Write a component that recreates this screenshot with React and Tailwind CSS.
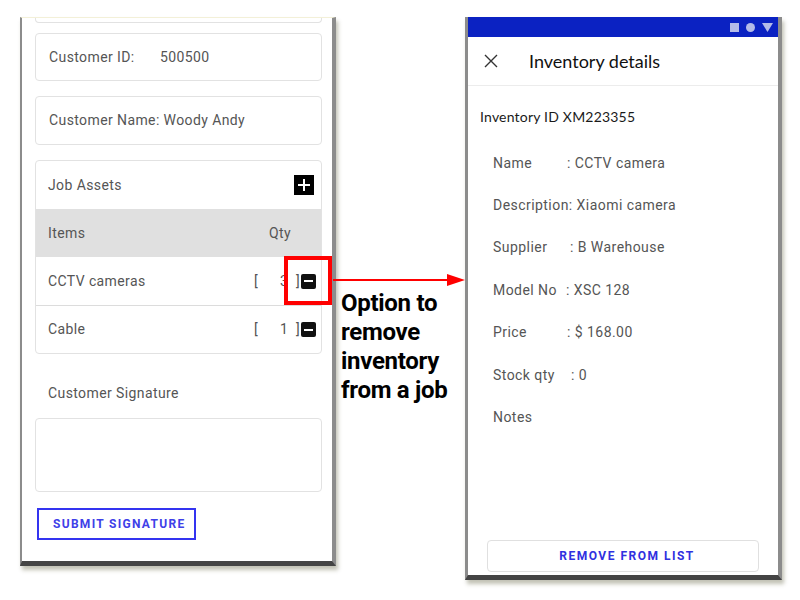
import React from 'react';

// --- small drawn icons ---

const PlusBox = () => (
  <div className="w-5 h-5 bg-black flex items-center justify-center">
    <svg width="14" height="14" viewBox="0 0 14 14">
      <path d="M7 1v12M1 7h12" stroke="#fff" strokeWidth="2" />
    </svg>
  </div>
);

const MinusBox = () => (
  <div className="w-[15px] h-[15px] bg-[#111] rounded-[2px] flex items-center justify-center">
    <div className="w-[9px] h-[2px] bg-white" />
  </div>
);

const assetRows = [
  { name: 'CCTV cameras', qty: 3, highlight: true },
  { name: 'Cable', qty: 1 },
];

const details = [
  { label: 'Name', w: 'w-[74px]', value: ': CCTV camera' },
  { label: 'Description', w: 'w-auto', value: ': Xiaomi camera' },
  { label: 'Supplier', w: 'w-[77px]', value: ': B Warehouse' },
  { label: 'Model No', w: 'w-[73px]', value: ': XSC 128' },
  { label: 'Price', w: 'w-[74px]', value: ': $ 168.00' },
  { label: 'Stock qty', w: 'w-[78px]', value: ': 0' },
  { label: 'Notes', w: 'w-auto', value: '' },
];

function JobPanel() {
  return (
    <div className="w-[316px] h-[549px] mt-[17px] ml-[20px] bg-white border-l-[2px] border-r-[4px] border-b-[5px] border-t border-l-[#8c8c8c] border-r-[#8c8c8c] border-b-[#444] border-t-[#f3f0d8] shadow-[2px_4px_4px_rgba(120,120,90,0.45)] flex flex-col text-[#555] text-[14px] tracking-[0.4px]">
      {/* cut-off card above */}
      <div className="ml-[13px] mr-[10px] h-[5px] border border-t-0 border-[#e2e2e2] rounded-b" />

      <div className="ml-[13px] mr-[10px] mt-[10px] h-[48px] border border-[#e2e2e2] rounded flex items-center px-[13px]">
        <span className="w-[111px]">Customer ID:</span>
        <span>500500</span>
      </div>

      <div className="ml-[13px] mr-[10px] mt-[15px] h-[49px] border border-[#e2e2e2] rounded flex items-center px-[13px]">
        Customer Name: Woody Andy
      </div>

      <div className="ml-[13px] mr-[10px] mt-[15px] border border-[#e2e2e2] rounded">
        <div className="h-[48px] flex items-center justify-between pl-[12px] pr-[7px]">
          <span>Job Assets</span>
          <PlusBox />
        </div>
        <div className="h-[48px] bg-[#e0e0e0] flex items-center justify-between pl-[12px] pr-[30px]">
          <span>Items</span>
          <span>Qty</span>
        </div>
        {assetRows.map((r, i) => (
          <div
            key={r.name}
            className={`relative h-[48px] flex items-center pl-[12px] pr-[5px] ${i > 0 ? 'border-t border-[#dcdcdc]' : ''}`}
          >
            <span className="flex-1">{r.name}</span>
            <span className="w-[26px]">[</span>
            <span className="w-[16px]">{r.qty}</span>
            <span className="w-[5px]">]</span>
            <MinusBox />
            {r.highlight && (
              <div className="absolute right-[-11px] top-[-1px] w-[48px] h-[49px] border-[4px] border-[#ff0000]" />
            )}
          </div>
        ))}
      </div>

      <div className="ml-[26px] mt-[29px]">Customer Signature</div>

      <div className="ml-[13px] mr-[10px] mt-[14px] h-[74px] border border-[#e2e2e2] rounded" />

      <div className="ml-[15px] mt-[16px] w-[159px] h-[32px] border-2 border-[#3434f0] flex items-center pl-[14px] text-[12px] font-bold tracking-[1.3px] text-[#4040e8]">
        SUBMIT SIGNATURE
      </div>
    </div>
  );
}

function Annotation() {
  return (
    <div className="w-[129px] pt-[274px] flex flex-col">
      <svg width="132" height="12" viewBox="0 0 132 12" className="-ml-[3px]">
        <line x1="0" y1="6" x2="116" y2="6" stroke="#ff0000" strokeWidth="2" />
        <polygon points="114,0 132,6 114,12" fill="#ff0000" />
      </svg>
      <div className="pl-[5px] mt-[3px] text-[24px] leading-[29px] font-bold text-black font-['Roboto',sans-serif] tracking-[-0.3px]">
        Option to<br />remove<br />inventory<br />from a job
      </div>
    </div>
  );
}

function InventoryPanel() {
  return (
    <div className="w-[317px] h-[563px] mt-[17px] bg-white border-l-[3px] border-r-[4px] border-b-[5px] border-l-[#8c8c8c] border-r-[#8c8c8c] border-b-[#444] shadow-[2px_4px_4px_rgba(120,120,90,0.45)] flex flex-col">
      {/* status bar */}
      <div className="h-[20px] bg-[#0b22c2] flex items-center justify-end gap-[7px] pr-[5px]">
        <div className="w-[9px] h-[9px] bg-[#b4bbe8]" />
        <div className="w-[9px] h-[9px] rounded-full bg-[#b4bbe8]" />
        <svg width="11" height="9" viewBox="0 0 11 9">
          <polygon points="0,0 11,0 5.5,9" fill="#b4bbe8" />
        </svg>
      </div>

      {/* header */}
      <div className="h-[49px] border-b border-[#ececec] flex items-center pl-[16px]">
        <svg width="14" height="14" viewBox="0 0 14 14">
          <path d="M1 1l12 12M13 1L1 13" stroke="#333" strokeWidth="1.4" />
        </svg>
        <span className="ml-[31px] text-[18px] text-[#111] font-['Lato',sans-serif]">Inventory details</span>
      </div>

      <div className="pl-[12px] mt-[21px] text-[14px] text-[#1a1a1a] font-['Lato',sans-serif] tracking-[0.2px] leading-[20px]">
        Inventory ID XM223355
      </div>

      <div className="pl-[25px] mt-[15px] flex flex-col text-[14px] text-[#555] tracking-[0.45px]">
        {details.map((d) => (
          <div key={d.label} className="h-[42.4px] flex items-center">
            <span className={`inline-block ${d.w}`}>{d.label}</span>
            <span>{d.value}</span>
          </div>
        ))}
      </div>

      <div className="mt-auto mb-[3px] mx-[19px] h-[32px] border border-[#e0e0e0] rounded flex items-center justify-center pl-[8px] text-[12px] font-bold tracking-[1.5px] text-[#3030e0]">
        REMOVE FROM LIST
      </div>
    </div>
  );
}

export default function App() {
  return (
    <div className="w-[800px] h-[600px] bg-white flex items-start font-['Roboto',sans-serif] overflow-hidden">
      <JobPanel />
      <Annotation />
      <InventoryPanel />
    </div>
  );
}
